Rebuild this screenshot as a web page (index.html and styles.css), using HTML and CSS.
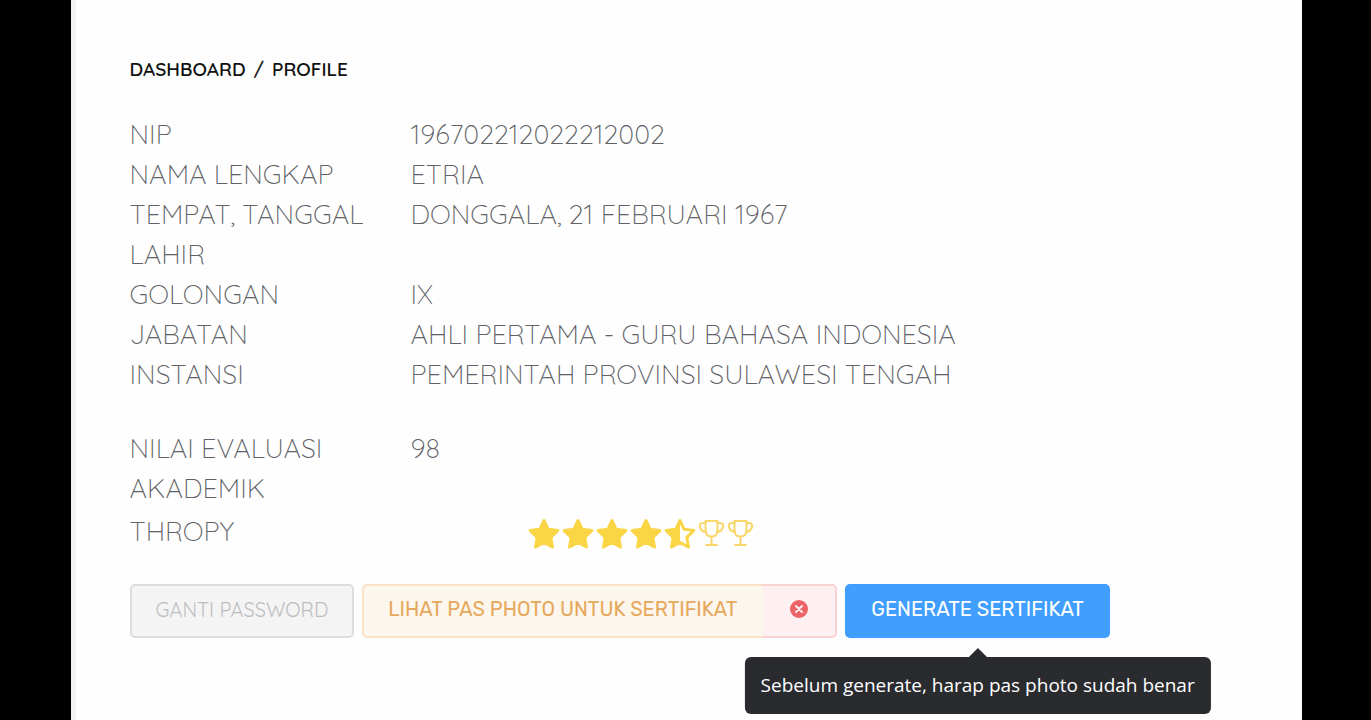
FILE: index.html
```html
<!DOCTYPE html>
<html lang="id">
<head>
  <meta charset="UTF-8" />
  <meta name="viewport" content="width=device-width, initial-scale=1.0" />
  <title>Profile</title>
  <link rel="stylesheet" href="styles.css">
</head>
<body>
  <svg class="sprite" aria-hidden="true">
    <symbol id="star" viewBox="0 0 32 32">
      <path d="M16 2.5 20.2 11.3 29.8 12.6 22.8 19.3 24.5 29 16 24.4 7.5 29 9.2 19.3 2.2 12.6 11.8 11.3Z" fill="currentColor" stroke="currentColor" stroke-width="3" stroke-linejoin="round"/>
    </symbol>
    <symbol id="star-half" viewBox="0 0 32 32">
      <path d="M16 2.5 20.2 11.3 29.8 12.6 22.8 19.3 24.5 29 16 24.4 7.5 29 9.2 19.3 2.2 12.6 11.8 11.3Z" fill="none" stroke="currentColor" stroke-width="3" stroke-linejoin="round"/>
      <path d="M16 2.5V24.4L7.5 29 9.2 19.3 2.2 12.6 11.8 11.3Z" fill="currentColor"/>
    </symbol>
    <symbol id="trophy" viewBox="0 0 28 32">
      <g fill="none" stroke="currentColor" stroke-width="2" stroke-linejoin="round" stroke-linecap="round">
        <path d="M8 3H20V12C20 16 18 18.5 14 18.5S8 16 8 12Z"/>
        <path d="M8 5H5.5C2.5 5 2 7 2.5 9 3 12 5 13.5 8.5 14"/>
        <path d="M20 5H22.500C25.500 5 26 7 25.500 9 25 12 23 13.500 19.500 14"/>
        <path d="M14 18.500V26.500M8.500 27H19.500"/>
      </g>
    </symbol>
  </svg>

  <main class="page">
    <nav class="breadcrumb" aria-label="Breadcrumb">
      <a href="#">DASHBOARD</a>
      <span>/</span>
      <a href="#">PROFILE</a>
    </nav>

    <table class="profile">
      <tr><th scope="row">NIP</th><td>196702212022212002</td></tr>
      <tr><th scope="row">NAMA LENGKAP</th><td>ETRIA</td></tr>
      <tr><th scope="row">TEMPAT, TANGGAL LAHIR</th><td>DONGGALA, 21 FEBRUARI 1967</td></tr>
      <tr><th scope="row">GOLONGAN</th><td>IX</td></tr>
      <tr><th scope="row">JABATAN</th><td>AHLI PERTAMA - GURU BAHASA INDONESIA</td></tr>
      <tr><th scope="row">INSTANSI</th><td>PEMERINTAH PROVINSI SULAWESI TENGAH</td></tr>
      <tr class="spaced"><th scope="row">NILAI EVALUASI AKADEMIK</th><td>98</td></tr>
      <tr class="trophy-row">
        <th scope="row">THROPY</th>
        <td>
          <div class="rating" role="img" aria-label="4.5">
            <svg class="star"><use href="#star"/></svg>
            <svg class="star"><use href="#star"/></svg>
            <svg class="star"><use href="#star"/></svg>
            <svg class="star"><use href="#star"/></svg>
            <svg class="star"><use href="#star-half"/></svg>
            <svg class="cup"><use href="#trophy"/></svg>
            <svg class="cup"><use href="#trophy"/></svg>
          </div>
        </td>
      </tr>
    </table>

    <div class="actions">
      <button type="button" class="btn btn-info">GANTI PASSWORD</button>
      <div class="btn-group">
        <button type="button" class="btn btn-warning">LIHAT PAS PHOTO UNTUK SERTIFIKAT</button>
        <button type="button" class="btn btn-danger" aria-label="Hapus">
          <svg class="close" viewBox="0 0 20 20">
            <circle cx="10" cy="10" r="9" fill="currentColor"/>
            <path d="M7 7 13 13M13 7 7 13" stroke="#fef0f0" stroke-width="2" stroke-linecap="round"/>
          </svg>
        </button>
      </div>
      <div class="tooltip-wrap">
        <button type="button" class="btn btn-primary" aria-describedby="tip">GENERATE SERTIFIKAT</button>
        <div class="tooltip" id="tip" role="tooltip">Sebelum generate, harap pas photo sudah benar</div>
      </div>
    </div>
  </main>
</body>
</html>
```

FILE: styles.css
```css
* {
  box-sizing: border-box;
}
body {
  margin: 0;
  padding: 0 5%;
  background-color: #000;
  font-family: Quicksand, Lato, sans-serif;
  color: #606266;
}
.sprite {
  display: block;
  width: 0;
  height: 0;
}
.page {
  min-height: 100vh;
  margin: 0 0 0 2px;
  padding: 55px 54px 0;
  background-color: #fefefe;
  border-left: 5px solid #f3f3f3;
}

.breadcrumb {
  display: flex;
  gap: 8px;
  font-size: 19px;
  line-height: 28px;
  font-weight: 600;
  color: #222;
}
.breadcrumb a {
  color: #111;
  text-decoration: none;
}

.profile {
  margin-top: 31px;
  border-collapse: collapse;
  font-size: 27px;
  line-height: 40px;
  font-weight: 300;
}
.profile th,
.profile td {
  padding: 0;
  font-weight: 300;
  text-align: left;
  vertical-align: top;
}
.profile th {
  width: 281px;
  padding-right: 40px;
}
.spaced th,
.spaced td {
  padding-top: 34px;
}
.trophy-row th,
.trophy-row td {
  padding-top: 3px;
}

.rating {
  display: flex;
  align-items: center;
  height: 46px;
  margin-left: 116px;
  color: #fad545;
}
.star {
  width: 34px;
  height: 32px;
}
.cup {
  width: 29px;
  height: 32px;
  color: #f9d66a;
}

.actions {
  display: flex;
  gap: 8px;
  margin-top: 27px;
}
.btn {
  height: 54px;
  padding: 0 24px 4px;
  border: 2px solid;
  border-radius: 5px;
  font-family: Rubik, Roboto, sans-serif;
  font-size: 20px;
  font-weight: 400;
  white-space: nowrap;
  cursor: pointer;
}
.btn-info {
  background-color: #f4f4f5;
  border-color: #dcdddf;
  color: #bcbec2;
  font-family: Quicksand, Lato, sans-serif;
}
.btn-group {
  display: flex;
}
.btn-warning {
  padding-right: 26px;
  background-color: #fdf6ec;
  border-color: #f9e2c6;
  border-right: 0;
  border-radius: 5px 0 0 5px;
  color: #e6a85c;
}
.btn-danger {
  display: flex;
  align-items: center;
  padding: 0 26px 4px;
  background-color: #fef0f0;
  border-color: #f9d2d2;
  border-left: 0;
  border-radius: 0 5px 5px 0;
  color: #ed6468;
}
.close {
  width: 20px;
  height: 20px;
}
.btn-primary {
  background-color: #409eff;
  border-color: #409eff;
  color: #fff;
}

.tooltip-wrap {
  position: relative;
}
.tooltip {
  position: absolute;
  top: 73px;
  left: 50%;
  transform: translateX(-50%);
  padding: 14px 16px;
  border-radius: 6px;
  background-color: #292b2f;
  color: #fff;
  font-family: "Open Sans", "Noto Sans", sans-serif;
  font-size: 19px;
  line-height: 29px;
  white-space: nowrap;
}
.tooltip::before {
  content: "";
  position: absolute;
  top: -9px;
  left: 50%;
  margin-left: -9px;
  border: 9px solid transparent;
  border-top: 0;
  border-bottom-color: #292b2f;
}
```
